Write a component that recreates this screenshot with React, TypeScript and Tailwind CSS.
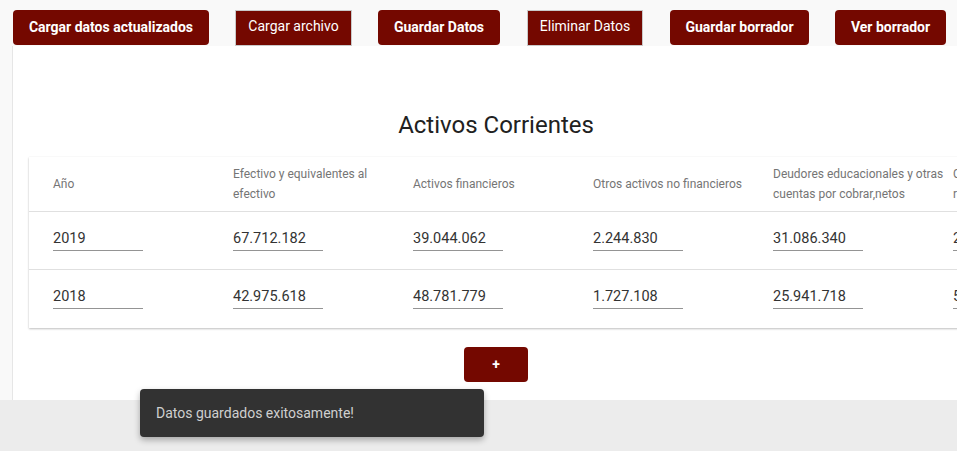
import React from 'react';

const columns = [
  'Año',
  'Efectivo y equivalentes al efectivo',
  'Activos financieros',
  'Otros activos no financieros',
  'Deudores educacionales y otras cuentas por cobrar,netos',
  'Cuentas por cobrar a entidades relacionadas',
];

const rows = [
  ['2019', '67.712.182', '39.044.062', '2.244.830', '31.086.340', '2.110.450'],
  ['2018', '42.975.618', '48.781.779', '1.727.108', '25.941.718', '5.318.220'],
];

const solidBtn =
  'h-[35px] rounded-[4px] bg-[#740800] text-white text-[14px] font-bold flex items-center justify-center shrink-0';
const squareBtn =
  'h-[36px] border border-[#c9c9c9] bg-[#740800] text-white text-[14px] pb-[3px] flex items-center justify-center shrink-0';

export default function App() {
  return (
    <div
      className="relative w-[957px] h-[451px] overflow-hidden bg-[#ececec]"
      style={{ fontFamily: 'Roboto, "Liberation Sans", sans-serif' }}
    >
      <div className="h-[400px] bg-[#f9f9f9] flex flex-col">
        {/* Toolbar */}
        <div className="flex items-start pt-[10px] h-[46px]">
          <button className={`${solidBtn} ml-[13px] w-[196px]`}>Cargar datos actualizados</button>
          <button className={`${squareBtn} ml-[26px] w-[117px]`}>Cargar archivo</button>
          <button className={`${solidBtn} ml-[26px] w-[122px]`}>Guardar Datos</button>
          <button className={`${squareBtn} ml-[27px] w-[116px]`}>Eliminar Datos</button>
          <button className={`${solidBtn} ml-[27px] w-[139px]`}>Guardar borrador</button>
          <button className={`${solidBtn} ml-[26px] w-[111px]`}>Ver borrador</button>
        </div>

        {/* Panel */}
        <div className="ml-[12px] w-[967px] flex-1 bg-white border-l border-[#e6e6e6] flex flex-col items-center">
          <h2 className="mt-[64px] h-[30px] text-[24px] leading-[30px] text-[#212121]">Activos Corrientes</h2>

          <div className="self-start ml-[16px] mt-[17px] w-[1110px] bg-white shadow-[0_1px_2px_rgba(0,0,0,0.25),0_0_1px_rgba(0,0,0,0.06)]">
            <div className="flex h-[55px] border-b border-[#e0e0e0] pl-[24px]">
              {columns.map((c) => (
                <div key={c} className="w-[180px] shrink-0 pr-[2px] flex items-center text-[12px] leading-[20px] text-[#757575]">
                  {c}
                </div>
              ))}
            </div>
            {rows.map((r, i) => (
              <div key={i} className={`flex h-[58px] pl-[24px] ${i === 0 ? 'border-b border-[#e0e0e0]' : ''}`}>
                {r.map((v, j) => (
                  <div key={j} className="w-[180px] shrink-0 pt-[16px]">
                    <div className="w-[90px] h-[23px] border-b border-[#949494] text-[14.5px] leading-[21px] text-[#333]">
                      {v}
                    </div>
                  </div>
                ))}
              </div>
            ))}
          </div>

          <button className="mt-[19px] w-[64px] h-[35px] rounded-[4px] bg-[#740800] text-white text-[14px] font-bold">
            +
          </button>
        </div>
      </div>

      {/* Snackbar */}
      <div className="absolute left-[140px] top-[389px] w-[344px] h-[48px] rounded-[4px] bg-[#323232] pl-[16px] flex items-center text-[14px] text-[#cfcfcf] shadow-[0_3px_6px_rgba(0,0,0,0.3)]">
        Datos guardados exitosamente!
      </div>
    </div>
  );
}
